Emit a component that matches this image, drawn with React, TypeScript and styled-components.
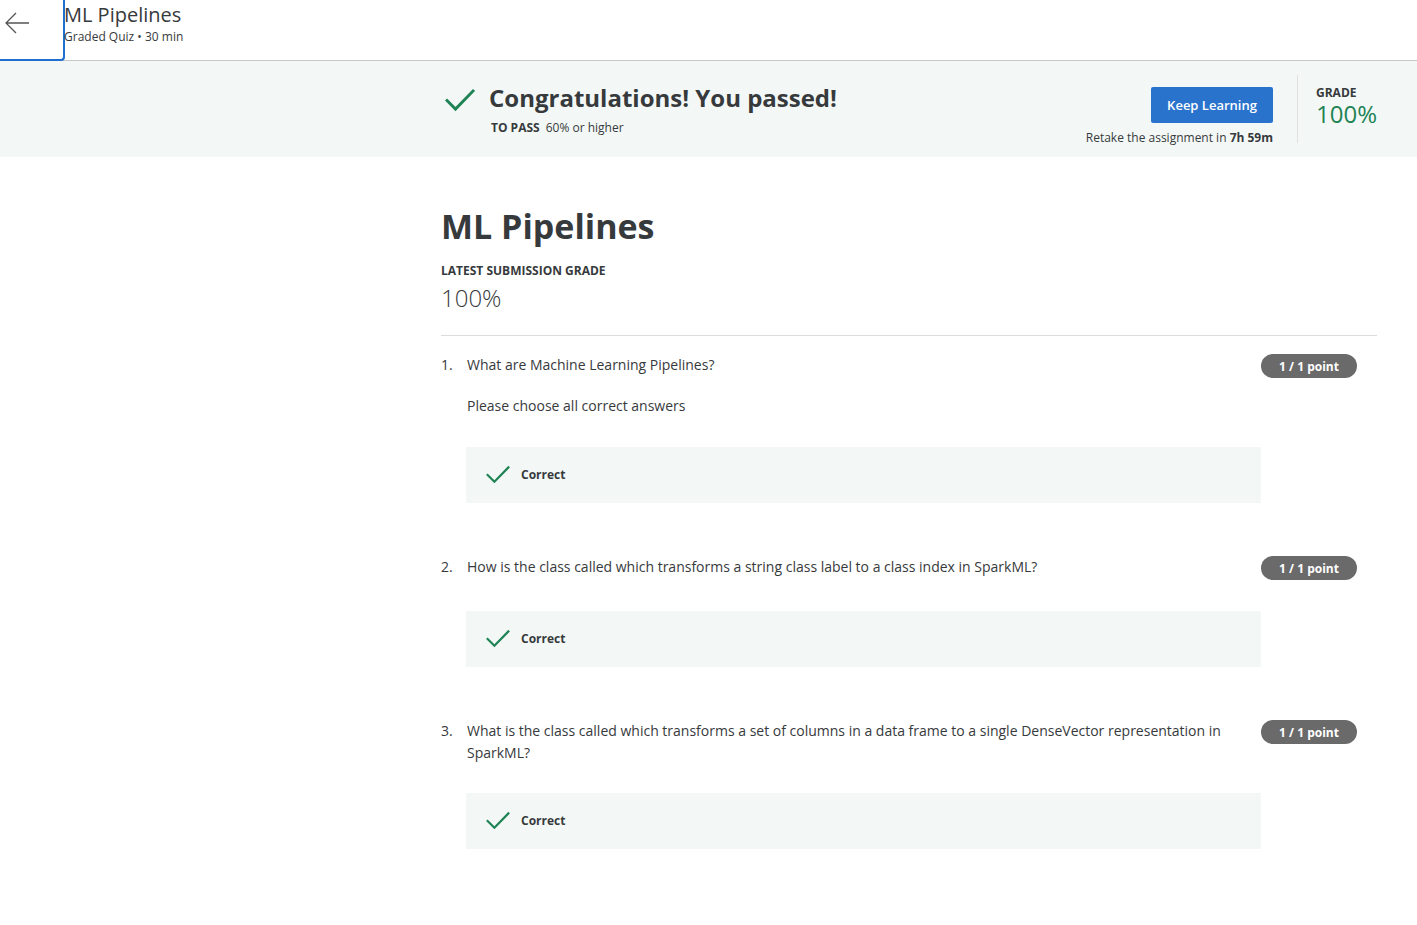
import React from "react";
import styled, { createGlobalStyle } from "styled-components";

const Global = createGlobalStyle`
  html, body { margin: 0; padding: 0; background: #fff; }
  body { font-family: "Open Sans", "Liberation Sans", sans-serif; color: #373a3c; }
  * { box-sizing: border-box; }
`;

const Header = styled.header`
  display: flex;
  align-items: stretch;
  height: 61px;
  border-bottom: 1px solid #c8c8c8;
`;

const BackButton = styled.button`
  width: 65px;
  height: 61px;
  margin-bottom: -1px;
  padding: 0 0 0 4px;
  display: flex;
  align-items: flex-start;
  padding-top: 11px;
  background: #fff;
  border: none;
  border-right: 2px solid #1f6fd1;
  border-bottom: 2px solid #1f6fd1;
  border-bottom-right-radius: 4px;
  cursor: pointer;
`;

const HeaderText = styled.div`
  display: flex;
  flex-direction: column;
  padding-top: 1px;
  margin-left: -1px;
`;

const HeaderTitle = styled.div`
  font-size: 20px;
  line-height: 28px;
  color: #373a3c;
`;

const HeaderSub = styled.div`
  font-size: 12px;
  line-height: 16px;
  color: #373a3c;
`;

const Banner = styled.section`
  background: #f3f8f7;
  height: 96px;
  display: flex;
  justify-content: flex-end;
`;

const BannerInner = styled.div`
  width: 976px;
  display: flex;
  padding-left: 2px;
  padding-right: 40px;
`;

const PassBlock = styled.div`
  flex: 1;
  display: flex;
  padding-top: 23px;
`;

const PassIcon = styled.div`
  width: 46px;
  padding-top: 4px;
  padding-left: 2px;
`;

const PassTitle = styled.div`
  font-size: 24px;
  font-weight: 700;
  line-height: 28px;
  color: #373a3c;
`;

const PassLine = styled.div`
  font-size: 12px;
  line-height: 16px;
  margin-top: 8px;
  margin-left: 2px;
  color: #373a3c;
  b { font-weight: 700; margin-right: 6px; }
`;

const ActionBlock = styled.div`
  display: flex;
  flex-direction: column;
  align-items: flex-end;
  padding-top: 26px;
  padding-right: 24px;
`;

const PrimaryButton = styled.button`
  background: #2a73cc;
  color: #fff;
  border: none;
  border-radius: 2px;
  width: 122px;
  height: 36px;
  font-family: "Open Sans", "Liberation Sans", sans-serif;
  font-size: 13px;
  font-weight: 600;
  cursor: pointer;
`;

const Retake = styled.div`
  font-size: 12px;
  line-height: 16px;
  margin-top: 7px;
  color: #373a3c;
  b { font-weight: 700; }
`;

const GradeBlock = styled.div`
  margin: 14px 0 14px;
  border-left: 1px solid #e0e0e0;
  padding: 10px 0 0 18px;
  width: 80px;
`;

const SmallCaps = styled.div`
  font-size: 12px;
  font-weight: 700;
  line-height: 16px;
  color: #373a3c;
`;

const GradeValue = styled.div`
  font-size: 24px;
  line-height: 26px;
  color: #1f8354;
`;

const Main = styled.main`
  margin-left: 441px;
  width: 936px;
  padding-top: 46px;
`;

const H1 = styled.h1`
  margin: 0;
  font-size: 34px;
  font-weight: 700;
  line-height: 46px;
  color: #373a3c;
`;

const SubmissionLabel = styled(SmallCaps)`
  margin-top: 14px;
`;

const SubmissionValue = styled.div`
  font-size: 24px;
  font-weight: 300;
  line-height: 32px;
  color: #373a3c;
  margin-top: 3px;
`;

const Divider = styled.hr`
  border: none;
  border-top: 1px solid #dcdcdc;
  margin: 21px 0 0;
`;

const QuestionList = styled.div`
  padding-top: 18px;
`;

const Question = styled.div`
  display: grid;
  grid-template-columns: 26px 794px 96px;
  padding-bottom: 53px;
`;

const Num = styled.div`
  font-size: 14px;
  line-height: 22px;
`;

const Body = styled.div`
  font-size: 14px;
  line-height: 22px;
  color: #373a3c;
`;

const Instruction = styled.p`
  margin: 19px 0 0;
  font-size: 14px;
  line-height: 22px;
`;

const Feedback = styled.div<{ $gap: number }>`
  margin-top: ${(p) => p.$gap}px;
  margin-left: -1px;
  background: #f3f8f7;
  height: 56px;
  display: flex;
  align-items: center;
  padding-left: 20px;
  gap: 11px;
  font-size: 12px;
  font-weight: 700;
  color: #373a3c;
`;

const Badge = styled.div`
  justify-self: end;
  width: 96px;
  height: 24px;
  border-radius: 12px;
  background: #6a6a6a;
  color: #fff;
  font-size: 12px;
  font-weight: 700;
  display: flex;
  align-items: center;
  justify-content: center;
`;

const Check = ({ size, w }: { size: number; w: number }) => (
  <svg width={size} height={size * 0.8} viewBox="0 0 30 24" fill="none">
    <path d="M2 12.5 L10.5 21 L28 3" stroke="#1f8354" strokeWidth={w} strokeLinecap="square" />
  </svg>
);

const questions = [
  {
    n: "1.",
    text: "What are Machine Learning Pipelines?",
    note: "Please choose all correct answers",
    gap: 30,
  },
  {
    n: "2.",
    text: "How is the class called which transforms a string class label to a class index in SparkML?",
    gap: 33,
  },
  {
    n: "3.",
    text: "What is the class called which transforms a set of columns in a data frame to a single DenseVector representation in SparkML?",
    gap: 29,
  },
];

export default function App() {
  return (
    <>
      <Global />
      <Header>
        <BackButton aria-label="Back">
          <svg width="26" height="24" viewBox="0 0 26 24" fill="none">
            <path d="M25 12 H2 M12 2 L2 12 L12 22" stroke="#555" strokeWidth="1.3" />
          </svg>
        </BackButton>
        <HeaderText>
          <HeaderTitle>ML Pipelines</HeaderTitle>
          <HeaderSub>Graded Quiz • 30 min</HeaderSub>
        </HeaderText>
      </Header>
      <Banner>
        <BannerInner>
          <PassBlock>
            <PassIcon>
              <Check size={30} w={3} />
            </PassIcon>
            <div>
              <PassTitle>Congratulations! You passed!</PassTitle>
              <PassLine>
                <b>TO PASS</b>60% or higher
              </PassLine>
            </div>
          </PassBlock>
          <ActionBlock>
            <PrimaryButton>Keep Learning</PrimaryButton>
            <Retake>
              Retake the assignment in <b>7h 59m</b>
            </Retake>
          </ActionBlock>
          <GradeBlock>
            <SmallCaps>GRADE</SmallCaps>
            <GradeValue>100%</GradeValue>
          </GradeBlock>
        </BannerInner>
      </Banner>
      <Main>
        <H1>ML Pipelines</H1>
        <SubmissionLabel>LATEST SUBMISSION GRADE</SubmissionLabel>
        <SubmissionValue>100%</SubmissionValue>
        <Divider />
        <QuestionList>
          {questions.map((q) => (
            <Question key={q.n}>
              <Num>{q.n}</Num>
              <Body>
                {q.text}
                {q.note && <Instruction>{q.note}</Instruction>}
                <Feedback $gap={q.gap}>
                  <Check size={24} w={2.7} />
                  Correct
                </Feedback>
              </Body>
              <Badge>1 / 1 point</Badge>
            </Question>
          ))}
        </QuestionList>
      </Main>
    </>
  );
}
